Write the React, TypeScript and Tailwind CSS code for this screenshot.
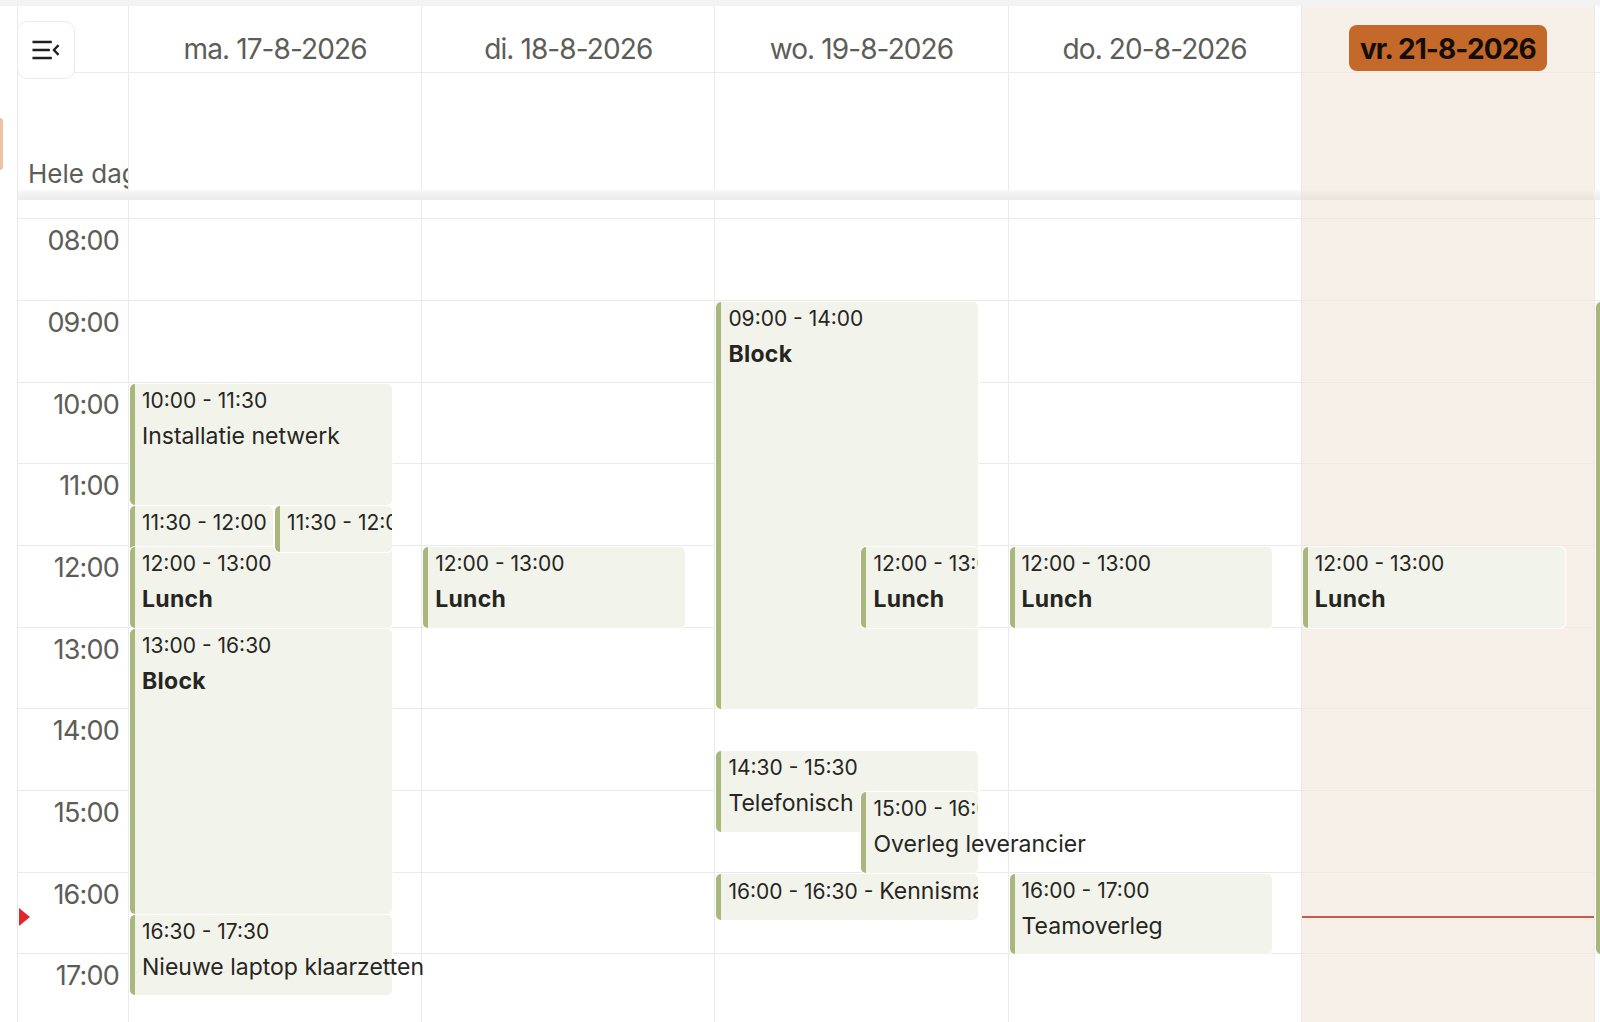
import React from "react";

const H = 81.67;
const OFF = 19.33;
const yOf = (t: number) => OFF + (t - 8) * H;

type Pos = "full" | "l" | "r";
type Ev = {
  s: number;
  e: number;
  time: string;
  title?: string;
  bold?: boolean;
  pos: Pos;
  short?: boolean;
  inline?: boolean;
  z: number;
};

type Day = { label: string; today?: boolean; events: Ev[] };

const days: Day[] = [
  {
    label: "ma. 17-8-2026",
    events: [
      { s: 10, e: 11.5, time: "10:00 - 11:30", title: "Installatie netwerk", pos: "full", z: 1 },
      { s: 11.5, e: 12, time: "11:30 - 12:00", pos: "l", short: true, z: 1 },
      { s: 12, e: 13, time: "12:00 - 13:00", title: "Lunch", bold: true, pos: "full", z: 2 },
      { s: 11.5, e: 12, time: "11:30 - 12:00", pos: "r", short: true, z: 3 },
      { s: 13, e: 16.5, time: "13:00 - 16:30", title: "Block", bold: true, pos: "full", z: 1 },
      { s: 16.5, e: 17.5, time: "16:30 - 17:30", title: "Nieuwe laptop klaarzetten", pos: "full", z: 1 },
    ],
  },
  {
    label: "di. 18-8-2026",
    events: [{ s: 12, e: 13, time: "12:00 - 13:00", title: "Lunch", bold: true, pos: "full", z: 1 }],
  },
  {
    label: "wo. 19-8-2026",
    events: [
      { s: 9, e: 14, time: "09:00 - 14:00", title: "Block", bold: true, pos: "full", z: 1 },
      { s: 12, e: 13, time: "12:00 - 13:00", title: "Lunch", bold: true, pos: "r", z: 2 },
      { s: 14.5, e: 15.5, time: "14:30 - 15:30", title: "Telefonisch", pos: "full", z: 1 },
      { s: 15, e: 16, time: "15:00 - 16:00", title: "Overleg leverancier", pos: "r", z: 2 },
      { s: 16, e: 16.5, time: "16:00 - 16:30", title: "Kennismaking", pos: "full", short: true, inline: true, z: 1 },
    ],
  },
  {
    label: "do. 20-8-2026",
    events: [
      { s: 12, e: 13, time: "12:00 - 13:00", title: "Lunch", bold: true, pos: "full", z: 1 },
      { s: 16, e: 17, time: "16:00 - 17:00", title: "Teamoverleg", pos: "full", z: 1 },
    ],
  },
  {
    label: "vr. 21-8-2026",
    today: true,
    events: [{ s: 12, e: 13, time: "12:00 - 13:00", title: "Lunch", bold: true, pos: "full", z: 1 }],
  },
  {
    label: "za. 22-8-2026",
    events: [{ s: 9, e: 17, time: "09:00 - 17:00", title: "Block", bold: true, pos: "full", z: 1 }],
  },
];

const hours = ["08:00", "09:00", "10:00", "11:00", "12:00", "13:00", "14:00", "15:00", "16:00", "17:00"];

function posClass(p: Pos) {
  if (p === "l") return "left-[1px] right-[calc(50%+2px)]";
  if (p === "r") return "left-[50%] right-[10%]";
  return "left-[1px] right-[10%]";
}

function Event({ ev }: { ev: Ev }) {
  const top = yOf(ev.s) + 1;
  const height = ev.short ? 46 : yOf(ev.e) - yOf(ev.s) - 1;
  return (
    <div
      className={`absolute ${posClass(ev.pos)} rounded-[5px] border-l-[5px] border-[#a9b77c] bg-[#f2f3eb] shadow-[0_0_0_1px_#ffffff] text-[#26261f]`}
      style={{ top, height, zIndex: ev.z }}
    >
      <div className="pl-[7px] pt-[5px]">
        {ev.inline ? (
          <div className="overflow-hidden whitespace-nowrap leading-[24px]">
            <span className="text-[21px]">{ev.time} - </span>
            <span className="text-[23px]">{ev.title}</span>
          </div>
        ) : (
          <>
            <div className="overflow-hidden whitespace-nowrap text-[21px] leading-[24px]">{ev.time}</div>
            {ev.title && (
              <div
                className={`mt-[9px] whitespace-nowrap text-[23px] leading-[28px] ${
                  ev.bold ? "font-bold tracking-[0.3px]" : ""
                }`}
              >
                {ev.title}
              </div>
            )}
          </>
        )}
      </div>
    </div>
  );
}

function MenuIcon() {
  return (
    <svg width="58" height="58" viewBox="0 0 58 58" fill="none">
      <path d="M15 20.7H35" stroke="#1f1f1f" strokeWidth="2.6" />
      <path d="M15 29H33" stroke="#1f1f1f" strokeWidth="2.6" />
      <path d="M15 37.3H35" stroke="#1f1f1f" strokeWidth="2.6" />
      <path d="M42 24L37.2 29L42 34" stroke="#1f1f1f" strokeWidth="2.4" strokeLinejoin="miter" />
    </svg>
  );
}

export default function App() {
  return (
    <div className="relative h-[1022px] w-[1600px] overflow-hidden bg-white font-['Inter',sans-serif]">
      <div className="h-[6px] w-full bg-[#f3f3f3]" />
      <div className="flex h-[1016px]">
        {/* left strip */}
        <div className="relative w-[17px] shrink-0 bg-white">
          <div className="absolute left-0 top-[112px] h-[52px] w-[3px] rounded-r-[3px] bg-[#edc3a3]" />
        </div>
        <div className="flex flex-col">
          {/* header */}
          <div className="flex h-[67px] shrink-0">
            <div className="h-full w-[111px] shrink-0 border-b border-l border-[#eaeaea]" />
            {days.map((d) => (
              <div
                key={d.label}
                className={`flex h-full w-[293.2px] shrink-0 justify-center border-b border-l pt-[19px] ${
                  d.today ? "border-l-[#eaeaea] border-b-[#f1e9e0] bg-[#f7f0e8]" : "border-[#eaeaea]"
                }`}
              >
                {d.today ? (
                  <div className="flex h-[46px] items-center rounded-[8px] bg-[#c5692b] px-[11px] pt-[1px] text-[28px] font-bold tracking-[-0.9px] text-[#140d06]">
                    {d.label}
                  </div>
                ) : (
                  <div className="flex h-[46px] items-center pt-[1px] text-[28px] tracking-[-0.9px] text-[#5d5d58]">
                    {d.label}
                  </div>
                )}
              </div>
            ))}
          </div>
          {/* all day */}
          <div className="flex h-[117px] shrink-0">
            <div className="flex h-full w-[111px] shrink-0 items-end overflow-hidden border-l border-[#eaeaea] pb-[1px] pl-[10px]">
              <span className="whitespace-nowrap text-[26px] leading-[31px] text-[#5d5d58]">Hele dag</span>
            </div>
            {days.map((d) => (
              <div
                key={d.label}
                className={`h-full w-[293.2px] shrink-0 border-l border-[#eaeaea] ${d.today ? "bg-[#f7f0e8]" : ""}`}
              />
            ))}
          </div>
          {/* separator */}
          <div className="flex h-[10px] shrink-0">
            <div className="h-full w-[111px] shrink-0 border-l border-[#eaeaea] bg-linear-to-b from-[#f8f8f8] to-[#ebebeb]" />
            {days.map((d) => (
              <div
                key={d.label}
                className={`h-full w-[293.2px] shrink-0 ${
                  d.today ? "bg-linear-to-b from-[#f4eee7] to-[#eae4dd]" : "bg-linear-to-b from-[#f8f8f8] to-[#ebebeb]"
                }`}
              />
            ))}
          </div>
          {/* body */}
          <div className="flex h-[822px] shrink-0">
            <div className="relative h-full w-[111px] shrink-0 border-l border-[#eaeaea]">
              <div className="h-[19.33px] border-b border-[#eaeaea]" />
              {hours.map((h) => (
                <div key={h} className="h-[81.67px] border-b border-[#eaeaea] pr-[9px] pt-[6px] text-right">
                  <span className="text-[27px] leading-[32px] tracking-[-0.8px] text-[#5d5d58]">{h}</span>
                </div>
              ))}
              <div className="absolute left-[1px] top-[708px] h-0 w-0 border-y-[9px] border-l-[11px] border-y-transparent border-l-[#e3262a]" />
            </div>
            {days.map((d) => (
              <div
                key={d.label}
                className={`relative h-full w-[293.2px] shrink-0 border-l border-[#eaeaea] ${d.today ? "bg-[#f7f0e8]" : ""}`}
              >
                <div className={`h-[19.33px] border-b ${d.today ? "border-[#f1e9e0]" : "border-[#eaeaea]"}`} />
                {hours.map((h) => (
                  <div key={h} className={`h-[81.67px] border-b ${d.today ? "border-[#f1e9e0]" : "border-[#eaeaea]"}`} />
                ))}
                {d.events.map((ev, i) => (
                  <Event key={i} ev={ev} />
                ))}
                {d.today && <div className="absolute left-0 right-0 top-[716px] z-10 h-[2px] bg-[#c45c4a]" />}
              </div>
            ))}
          </div>
        </div>
      </div>
      {/* menu button */}
      <div className="absolute left-[17px] top-[21px] z-20 flex h-[58px] w-[58px] items-center justify-center rounded-[10px] border border-[#ebebeb] bg-white">
        <MenuIcon />
      </div>
    </div>
  );
}
